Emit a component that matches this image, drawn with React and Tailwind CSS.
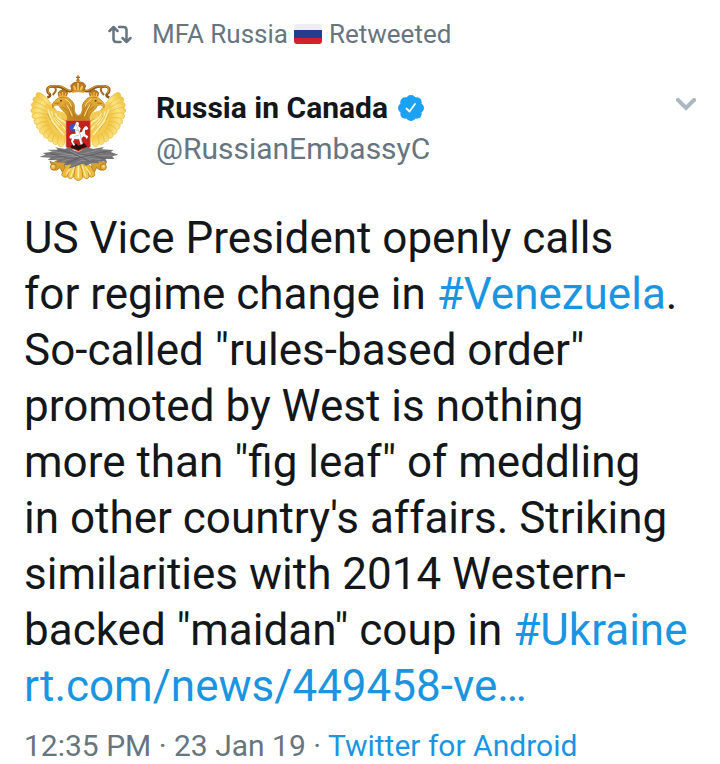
import React from 'react';

// long feathers of one wing, outermost first
const feathers = [
  [50, 82], [40, 96], [35, 113], [33, 131], [36, 149],
  [42, 167], [50, 184], [60, 200], [73, 214], [88, 226], [104, 235], [122, 242],
];

const Feather = ({ x, y }) => {
  const rootX = 130;
  const rootY = 160;
  const dx = x - rootX;
  const dy = y - rootY;
  const len = Math.hypot(dx, dy);
  const nx = (-dy / len) * 11;
  const ny = (dx / len) * 11;
  const mx = rootX + dx * 0.75;
  const my = rootY + dy * 0.75;
  return (
    <path
      d={`M${rootX} ${rootY}L${mx + nx} ${my + ny}Q${x + nx} ${y + ny} ${x} ${y}Q${x - nx} ${y - ny} ${mx - nx} ${my - ny}Z`}
      fill="url(#wing)"
      stroke="#e5b93a"
      strokeWidth="2"
    />
  );
};

const EagleHalf = () => (
  <g>
    {feathers.map(([x, y]) => (
      <Feather key={x + '-' + y} x={x} y={y} />
    ))}
    {/* shoulder */}
    <path d="M76 114Q94 120 105 135Q118 132 142 145L142 214Q120 216 104 201Q80 178 76 114Z" fill="#f3cb54" />
    <path
      d="M84 130Q92 162 112 183M94 136Q100 160 120 178M106 142Q112 158 132 168M92 162L132 207M104 154L138 192M116 150L140 176"
      fill="none"
      stroke="#fff0a8"
      strokeWidth="4"
    />
    <path
      d="M82 142Q92 170 114 194M99 148Q108 166 126 180M112 148Q122 160 138 164"
      fill="none"
      stroke="#d3a02c"
      strokeWidth="2"
    />
    {/* neck and head */}
    <path
      d="M176 166L141 164Q146 148 132 137Q120 128 117 118L108 117Q102 118 98 125Q94 112 104 105Q112 94 127 93Q144 90 154 103Q166 114 163 132Q164 145 176 150Z"
      fill="url(#gold)"
      stroke="#b27819"
      strokeWidth="2"
    />
    <path
      d="M144 104Q154 116 151 137M135 112Q149 130 151 152M156 117Q158 136 163 155M126 122L142 133"
      fill="none"
      stroke="#a8721c"
      strokeWidth="2"
    />
    <path d="M136 99Q150 106 155 122M140 116Q150 132 157 150" fill="none" stroke="#ffe48a" strokeWidth="3" />
    <path d="M104 112L119 111" stroke="#8a520d" strokeWidth="2" />
    <circle cx="123" cy="104" r="3" fill="#6d3d08" />
    {/* small crown */}
    <path d="M117 93L114 80Q120 72 128 73Q138 72 143 80L139 92Z" fill="#c07d1c" stroke="#8b520f" strokeWidth="2" />
    <path d="M121 90L119 81M128 90V78M135 89L138 81" stroke="#f6cd62" strokeWidth="3" />
    <path d="M115 93Q128 88 141 92" stroke="#edb845" strokeWidth="4" fill="none" />
    <path d="M128 64V74M124 68H132" stroke="#a4651a" strokeWidth="3" />
    {/* ribbon */}
    <path
      d="M157 73Q147 79 137 70Q119 58 103 62Q88 59 83 67Q80 78 89 84Q94 91 82 94"
      fill="none"
      stroke="#8a5519"
      strokeWidth="8"
    />
    <path
      d="M157 72Q147 77 137 68Q119 56 103 60Q88 58 84 67Q82 76 90 83"
      fill="none"
      stroke="#cf9132"
      strokeWidth="4"
    />
    <path d="M104 62Q111 72 104 80L98 87" fill="none" stroke="#a56a20" strokeWidth="6" />
    {/* claw */}
    <path
      d="M114 282L100 290L90 286Q91 298 104 300L96 311Q110 317 120 305L126 317Q139 311 134 296L148 286Z"
      fill="#dc9f2e"
      stroke="#94601a"
      strokeWidth="2"
    />
    <circle cx="100" cy="303" r="9" fill="#e1ae40" stroke="#a36d1e" strokeWidth="2" />
    <circle cx="99" cy="301" r="4" fill="#f9dc86" />
    {/* tail feathers */}
    <path d="M156 283Q128 307 125 327Q135 341 146 327Q158 311 168 286Z" fill="#eeb83f" stroke="#ad741a" strokeWidth="2" />
    <path d="M166 285Q143 308 143 333Q151 345 161 331Q168 310 174 286Z" fill="#f5c64f" stroke="#b67c1e" strokeWidth="2" />
    <path d="M154 302L138 325M164 300L152 333" stroke="#ffed9a" strokeWidth="4" />
  </g>
);

const Emblem = () => (
  <svg viewBox="30 24 297 324" className="h-[108px] w-[99px]" role="img" aria-label="Russia in Canada">
    <defs>
      <radialGradient id="wing" gradientUnits="userSpaceOnUse" cx="130" cy="160" r="105">
        <stop offset="0" stopColor="#cc8f1f" />
        <stop offset="0.5" stopColor="#f3c94c" />
        <stop offset="0.75" stopColor="#fbe380" />
        <stop offset="1" stopColor="#f1c845" />
      </radialGradient>
      <linearGradient id="gold" x1="0" y1="0" x2="1" y2="1">
        <stop offset="0" stopColor="#f0bc48" />
        <stop offset="0.5" stopColor="#d59a2a" />
        <stop offset="1" stopColor="#b97915" />
      </linearGradient>
    </defs>
    <EagleHalf />
    <g transform="translate(350 0) scale(-1 1)">
      <EagleHalf />
    </g>
    <path d="M175 285Q160 310 162 335Q175 353 188 335Q190 310 175 285Z" fill="#f3c248" stroke="#b07518" strokeWidth="2" />
    <path d="M175 298V336" stroke="#fff0a0" strokeWidth="5" />
    {/* large crown */}
    <path d="M157 77L152 59Q160 46 174 48Q191 46 197 59L191 77Z" fill="#bd781d" stroke="#85500f" strokeWidth="2" />
    <path d="M162 72L159 60Q166 54 169 72M186 72L190 60Q182 54 179 72" fill="#efbc55" />
    <path d="M174 50V74" stroke="#ffd97a" strokeWidth="4" />
    <path d="M156 78Q174 72 193 78" fill="none" stroke="#d99e37" strokeWidth="6" />
    <circle cx="174" cy="43" r="5" fill="#c58223" />
    <path d="M174 28V42M168 34H180" stroke="#a7671b" strokeWidth="4" />
    {/* shield */}
    <path d="M138 163H211V242Q209 247 201 248Q184 249 175 257Q166 249 150 248Q140 247 138 242Z" fill="#c3221c" stroke="#d59a48" strokeWidth="2" />
    <path d="M153 239L167 232L176 239L192 231L202 242Q185 246 175 253Q165 248 153 246Z" fill="#2c1010" />
    <path d="M166 174Q152 173 147 181Q149 190 146 195L155 192L162 197L171 188Z" fill="#3553c5" />
    <path
      d="M170 167Q177 167 177 174L175 180L182 187L178 200L186 197Q188 188 194 182L199 180L205 187L201 192L195 191Q194 203 197 206L205 211L200 220L197 214L190 211L184 218L188 234L182 236L177 219Q170 221 164 218L159 227L166 237L160 239L153 226L156 216Q150 221 148 213Q149 205 157 204L167 203L165 190L159 188L164 180Z"
      fill="#fff"
    />
    <path d="M166 170L181 207L187 232M166 191L174 194M163 211L176 208" fill="none" stroke="#a3aab9" strokeWidth="2" />
    {/* branches */}
    <path
      d="M105 244L135 249L148 243L159 252L175 258L190 250L200 243L219 249L252 243L245 250L281 252L272 258L295 266L277 271L283 279L256 279L261 287L235 286L238 292L212 291L201 299L187 293L168 301L146 308L154 295L131 299L136 290L108 289L115 283L83 282L92 275L58 273L77 266L69 261L98 257L82 251L116 251Z"
      fill="#737375"
    />
    <path
      d="M90 254L153 267L190 279M73 270L126 268L190 263L247 249M103 280L151 272L244 269L278 267M126 287L180 268L250 261M151 255L196 275L242 281M151 302L183 284L213 281"
      fill="none"
      stroke="#9b9b9d"
      strokeWidth="2"
    />
    <path
      d="M111 251L158 262L207 285M91 263L142 276L177 276M141 291L181 274L217 266L260 256M171 263L225 270L257 279"
      fill="none"
      stroke="#55555a"
      strokeWidth="2"
    />
  </svg>
);

const RetweetIcon = () => (
  <svg viewBox="0 0 24 20" className="h-5 w-6" fill="none" stroke="#66757f" strokeWidth="2.5" strokeLinecap="round" strokeLinejoin="round" aria-hidden="true">
    <path d="M1.5 7L5.5 3L9.5 7M5.5 3V15Q5.5 18 8.5 18H12.5" />
    <path d="M11 3H15.5Q18.5 3 18.5 6V18M14.5 14L18.5 18L22.5 14" />
  </svg>
);

const RussianFlag = () => (
  <svg viewBox="0 0 28 20" className="mr-[7px] ml-[6px] h-5 w-7" role="img" aria-label="Russian flag">
    <path d="M0 6V3Q0 0 3 0H25Q28 0 28 3V6Z" fill="#eeeeee" />
    <path d="M0 6H28V14H0Z" fill="#20408f" />
    <path d="M0 14H28V17Q28 20 25 20H3Q0 20 0 17Z" fill="#d2202c" />
  </svg>
);

const VerifiedBadge = () => (
  <svg viewBox="0 0 26 26" className="h-[26px] w-[26px]" role="img" aria-label="Verified account">
    <g fill="#1da1f2">
      <circle cx="13" cy="13" r="11" />
      <circle cx="13" cy="5" r="5" />
      <circle cx="18.7" cy="7.3" r="5" />
      <circle cx="21" cy="13" r="5" />
      <circle cx="18.7" cy="18.7" r="5" />
      <circle cx="13" cy="21" r="5" />
      <circle cx="7.3" cy="18.7" r="5" />
      <circle cx="5" cy="13" r="5" />
      <circle cx="7.3" cy="7.3" r="5" />
    </g>
    <path d="M8.5 13.5L11.5 16.5L17 9" fill="none" stroke="#fff" strokeWidth="1.8" strokeLinecap="round" strokeLinejoin="round" />
  </svg>
);

const App = () => {
  return (
    <main className="min-h-screen bg-white px-6 pt-4 font-['Roboto',sans-serif] text-[#14171a]">
      <article>
        <div className="flex items-center pl-[84px] text-[26px] leading-9 text-[#66757f]">
          <RetweetIcon />
          <span className="ml-5">MFA Russia</span>
          <RussianFlag />
          <span>Retweeted</span>
        </div>

        <header className="mt-[22px] flex items-start">
          <div className="ml-[6px] shrink-0">
            <Emblem />
          </div>
          <div className="ml-[27px] min-w-0 flex-1 pt-[14px]">
            <div className="flex items-center gap-[10px]">
              <h1 className="text-[30px] leading-10 font-bold">Russia in Canada</h1>
              <VerifiedBadge />
            </div>
            <p className="text-[30px] leading-[42px] text-[#66757f]">@RussianEmbassyC</p>
          </div>
          <button type="button" aria-label="More options" className="mt-6">
            <svg viewBox="0 0 20 13" className="h-[13px] w-5" fill="none" stroke="#aab8c2" strokeWidth="4" strokeLinecap="round" aria-hidden="true">
              <path d="M2 2L10 10L18 2" />
            </svg>
          </button>
        </header>

        <p className="mt-7 text-[44px] leading-[56px]">
          US Vice President openly calls<br />
          for regime change in <a href="#venezuela" className="text-[#1b95e0]">#Venezuela</a>.<br />
          So-called "rules-based order"<br />
          promoted by West is nothing<br />
          more than "fig leaf" of meddling<br />
          in other country's affairs. Striking<br />
          similarities with 2014 Western-<br />
          backed "maidan" coup in <a href="#ukraine" className="text-[#1b95e0]">#Ukraine</a><br />
          <a href="#article" className="text-[#1b95e0]">rt.com/news/449458-ve…</a>
        </p>

        <footer className="mt-3 text-[30px] leading-10 text-[#66757f]">
          <time dateTime="2019-01-23T12:35">12:35 PM · 23 Jan 19</time>
          {' · '}
          <a href="#android" className="text-[#1b95e0]">Twitter for Android</a>
        </footer>
      </article>
    </main>
  );
};

export default App;
